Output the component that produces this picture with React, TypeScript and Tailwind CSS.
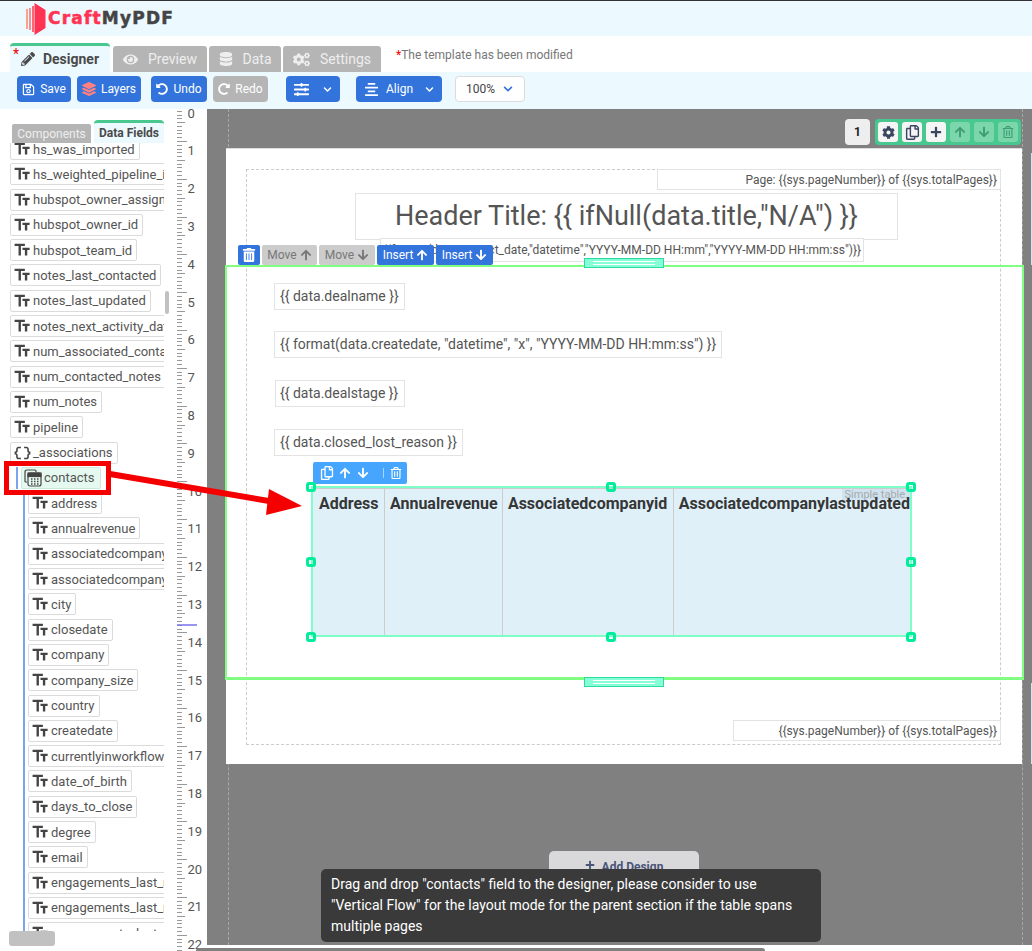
import React from "react";
import {
  FaRegSave, FaLayerGroup, FaUndoAlt, FaRedoAlt, FaSlidersH, FaAlignCenter, FaChevronDown,
  FaPencilAlt, FaEye, FaDatabase, FaCogs, FaArrowUp, FaArrowDown, FaCog, FaRegCopy, FaPlus,
  FaTrashAlt, FaRegTrashAlt,
} from "react-icons/fa";
import { MdFormatSize, MdDataObject } from "react-icons/md";

function Logo() {
  return (
    <div className="flex items-center pl-[26px] h-full">
      <svg width="20" height="32" viewBox="0 0 20 32">
        <rect x="0" y="6" width="2" height="20" fill="#f5a58f" />
        <rect x="3" y="5" width="2" height="22" fill="#ff8a94" />
        <rect x="6" y="3" width="2" height="26" fill="#ff6673" />
        <path d="M8.5 0 L19.5 7 V25 L8.5 32 Z" fill="#ff3352" />
      </svg>
      <span className="font-['DejaVu_Sans',sans-serif] font-bold text-[17px] tracking-[1.2px] ml-[2px] leading-none [-webkit-text-stroke:0.5px_currentColor]">
        <span className="text-[#ff3352]">Craft</span>
        <span className="text-[#444]">MyPDF</span>
      </span>
    </div>
  );
}

function TabBtn({ icon, label, active, mark }: { icon: React.ReactNode; label: string; active?: boolean; mark?: boolean }) {
  return (
    <div
      className={
        active
          ? "relative h-[29px] w-[100px] flex items-center justify-center gap-[8px] rounded-t-[4px] border-t-[3px] border-[#48c78e] bg-[#ecf9ff] text-[#4a4a4a] font-bold text-[14px] mr-[1px]"
          : "h-[26px] flex items-center justify-center gap-[10px] rounded-t-[3px] bg-[#b5b5b5] text-[#eeeeee] text-[14px]"
      }
    >
      {mark && <span className="absolute left-[3px] top-[1px] text-[#e00] text-[14px] leading-none font-normal">*</span>}
      {icon}
      <span>{label}</span>
    </div>
  );
}

function ToolBtn({ children, w, gray }: { children: React.ReactNode; w: string; gray?: boolean }) {
  return (
    <div className={`${w} h-[26px] rounded-[4px] flex items-center justify-center gap-[5px] text-[12px] text-white ${gray ? "bg-[#b5b5b5]" : "bg-[#3273dc]"}`}>
      {children}
    </div>
  );
}

const top1 = [
  "hs_was_imported", "hs_weighted_pipeline_in_progress", "hubspot_owner_assigneddate", "hubspot_owner_id", "hubspot_team_id",
  "notes_last_contacted", "notes_last_updated", "notes_next_activity_date", "num_associated_contacts", "num_contacted_notes",
  "num_notes", "pipeline",
];
const nested = [
  "address", "annualrevenue", "associatedcompanyid", "associatedcompanylastupdated", "city", "closedate", "company", "company_size",
  "country", "createdate", "currentlyinworkflow", "date_of_birth", "days_to_close", "degree", "email",
  "engagements_last_meeting_booked", "engagements_last_meeting_booked_campaign", "engagements_last_meeting_booked_medium",
];

function Field({ name, icon }: { name: string; icon?: React.ReactNode }) {
  return (
    <div className="h-[22px] w-max shrink-0 flex items-center border border-[#dbdbdb] rounded-[2px] pl-[2px] pr-[4px] bg-white text-[13px] text-[#555] leading-none">
      <span className="w-[19px] flex justify-center text-[#444] mr-[1px]">{icon ?? <MdFormatSize size={20} className="-scale-x-100" />}</span>
      <span className="whitespace-nowrap">{name}</span>
    </div>
  );
}

function Sidebar() {
  return (
    <div className="w-[177px] h-full relative shrink-0">
      <div className="flex items-end h-[34px] pl-[12px] gap-[3px]">
        <div className="w-[79px] h-[19px] bg-[#b5b5b5] text-[#eee] text-[12px] rounded-t-[2px] flex items-center justify-center">Components</div>
        <div className="w-[70px] h-[23px] bg-[#ecf9ff] text-[#4a4a4a] font-bold text-[12px] rounded-t-[4px] border-t-[3px] border-[#48c78e] flex items-center justify-center">Data Fields</div>
      </div>
      <div className="ml-[10px] w-[154px] h-[788px] overflow-hidden">
        <div className="-mt-[5px] flex flex-col gap-[3.3px]">
          {top1.map((n) => <Field key={n} name={n} />)}
          <Field name="_associations" icon={<MdDataObject size={20} />} />
          <div className="flex h-[22px] shrink-0 pl-[6px] gap-[3px] items-stretch">
            <div className="w-[2px] bg-[#7ba4ef]" />
            <div className="flex items-center bg-[#e6f9f1] border border-[#cfe8dc] rounded-[2px] pl-[2px] pr-[5px] text-[13px] text-[#555]">
              <svg width="18" height="18" viewBox="0 0 18 18" className="mr-[2px]" fill="none" stroke="#444" strokeWidth="1.2">
                <path d="M3 13 H2 Q1 13 1 12 V3 Q1 1 3 1 H11 Q12 1 12 2 V3" />
                <rect x="4" y="4" width="13" height="13" rx="2" />
                <rect x="4" y="4" width="13" height="3.5" fill="#444" />
                <path d="M7 10 H8.5 M10 10 H11.5 M13 10 H14.5 M7 12.5 H8.5 M10 12.5 H11.5 M13 12.5 H14.5 M7 15 H8.5 M10 15 H11.5 M13 15 H14.5" strokeWidth="1.5" />
              </svg>
              contacts
            </div>
          </div>
          <div className="flex pl-[13px] gap-[3px]">
            <div className="w-[2px] bg-[#7ba4ef] shrink-0" />
            <div className="flex flex-col gap-[3.3px] min-w-0">
              {nested.map((n, i) => <Field key={n + i} name={n} />)}
            </div>
          </div>
        </div>
      </div>
      <div className="h-[15px] ml-[9px] w-[46px] bg-[#c1c1c1] rounded-[3px]" />
      <div className="absolute left-[165px] top-[182px] w-[4px] h-[23px] bg-[#c1c1c1] rounded-[2px]" />
    </div>
  );
}

function Ruler() {
  const ticks: React.ReactNode[] = [];
  for (let i = 0; i < 225; i++) {
    const y = Math.round(32 - 37.8 + i * 3.78) + 0.5;
    const k = i % 10;
    const len = k === 0 ? 10 : k === 5 ? 8 : 5;
    ticks.push(<line key={i} x1="0" x2={len} y1={y} y2={y} stroke="#999" strokeWidth="1" />);
  }
  const nums: React.ReactNode[] = [];
  for (let n = 0; n <= 22; n++) {
    nums.push(
      <text key={n} x="10.5" y={8.5 + n * 37.8} fontSize="13" fill="#555" fontFamily="Roboto, sans-serif">{n}</text>
    );
  }
  return (
    <svg width="30" height="842" viewBox="0 0 30 842" className="shrink-0">
      {ticks}
      {nums}
      <line x1="0" x2="20" y1="516" y2="516" stroke="#7575ee" strokeWidth="1.5" />
    </svg>
  );
}

function Handle({ x, y }: { x: number; y: number }) {
  return (
    <div
      className="absolute w-[10px] h-[10px] border-[3px] border-[#00ee9c] rounded-[3px]"
      style={{ left: x - 5, top: y - 5 }}
    />
  );
}

function FlowBar({ y }: { y: string }) {
  return (
    <div className={`absolute left-[377px] ${y} w-[80px] h-[10px] bg-[#84ffd6] border border-[#2bdc9c] flex flex-col justify-center gap-[2px] px-[8px]`}>
      <div className="h-px bg-white" />
      <div className="h-px bg-white" />
    </div>
  );
}

function Box({ cls, children }: { cls: string; children?: React.ReactNode }) {
  return (
    <div className={`absolute border border-[#e3e3e3] bg-white text-[#555] whitespace-nowrap overflow-hidden flex items-center ${cls}`}>
      {children}
    </div>
  );
}

function PageBtn({ children, off }: { children: React.ReactNode; off?: boolean }) {
  return (
    <div className={`w-[20px] h-[20px] rounded-[3px] flex items-center justify-center ${off ? "bg-[#7bd6ac] text-[#3c9c72]" : "bg-[#f5f5f5] text-[#3a4560]"}`}>
      {children}
    </div>
  );
}

function Canvas() {
  return (
    <div className="flex-1 h-[836px] bg-[#808080] relative overflow-hidden">
      <div className="absolute left-[21px] top-0 bottom-0 border-l border-dashed border-[#a8a8a8]" />
      <div className="absolute left-[815px] top-0 bottom-0 border-l border-dashed border-[#a8a8a8]" />
      <div className="absolute right-0 top-[44px] h-[112px] w-px bg-[#cfe6f2]" />
      <div className="absolute right-0 top-[574px] h-[81px] w-px bg-[#cfe6f2]" />

      {/* page controls */}
      <div className="absolute left-[638px] top-[10px] flex gap-[5px]">
        <div className="w-[25px] h-[26px] rounded-[4px] bg-[#eeeeee] text-[#222] text-[12px] font-bold flex items-center justify-center">1</div>
        <div className="w-[146px] h-[26px] rounded-[4px] bg-[#48c78e] flex items-center gap-[4px] pl-[3px]">
          <PageBtn><FaCog size={13} /></PageBtn>
          <PageBtn><FaRegCopy size={15} /></PageBtn>
          <PageBtn><FaPlus size={12} /></PageBtn>
          <PageBtn off><FaArrowUp size={12} /></PageBtn>
          <PageBtn off><FaArrowDown size={12} /></PageBtn>
          <PageBtn off><FaRegTrashAlt size={12} /></PageBtn>
        </div>
      </div>

      {/* page sheet */}
      <div className="absolute left-[19px] top-[39px] w-[796px] h-[616px] bg-white border-t border-[#dddddd]">
        <div className="absolute left-[20px] top-[20px] w-[755px] h-[576px] border border-dashed border-[#cccccc]" />
        <Box cls="left-[431px] top-[20px] w-[344px] h-[21px] justify-end pr-[3px] text-[12px]">Page: {"{{sys.pageNumber}}"} of {"{{sys.totalPages}}"}</Box>
        <Box cls="left-[129px] top-[44px] w-[543px] h-[47px] justify-center text-[27px]">{'Header Title: {{ ifNull(data.title,"N/A") }}'}</Box>
        <Box cls="left-[154px] top-[89px] w-[484px] h-[24px] justify-center text-[12px]">{'{{format(data.contact_date,"datetime","YYYY-MM-DD HH:mm","YYYY-MM-DD HH:mm:ss")}}'}</Box>
        <Box cls="left-[507px] top-[571px] w-[268px] h-[21px] justify-end pr-[3px] text-[12px]">{"{{sys.pageNumber}} of {{sys.totalPages}}"}</Box>
      </div>

      {/* section */}
      <div className="absolute left-[18px] top-[156px] w-[799px] h-[415px] border-[2px] border-b-[3px] border-[#80ff80]" />
      <FlowBar y="top-[149px]" />
      <FlowBar y="top-[568px]" />

      {/* section toolbar */}
      <div className="absolute left-[31px] top-[136px] flex gap-[2px] h-[20px] text-[12px] text-[#777]">
        <div className="w-[22px] rounded-[2px] bg-[#3273dc] text-white flex items-center justify-center"><FaTrashAlt size={14} /></div>
        <div className="w-[55px] rounded-[2px] bg-[#cccccc] flex items-center justify-center gap-[3px]">Move <FaArrowUp size={12} /></div>
        <div className="w-[56px] rounded-[2px] bg-[#cccccc] flex items-center justify-center gap-[3px]">Move <FaArrowDown size={12} /></div>
        <div className="w-[57px] rounded-[2px] bg-[#3273dc] text-white flex items-center justify-center gap-[3px]">Insert <FaArrowUp size={12} /></div>
        <div className="w-[57px] rounded-[2px] bg-[#3273dc] text-white flex items-center justify-center gap-[3px]">Insert <FaArrowDown size={12} /></div>
      </div>

      {/* fields */}
      <Box cls="left-[67px] top-[174px] w-[131px] h-[27px] pl-[5px] text-[14px]">{"{{ data.dealname }}"}</Box>
      <Box cls="left-[67px] top-[222px] w-[448px] h-[27px] pl-[5px] text-[14px]">{'{{ format(data.createdate, "datetime", "x", "YYYY-MM-DD HH:mm:ss") }}'}</Box>
      <Box cls="left-[68px] top-[271px] w-[130px] h-[27px] pl-[4px] text-[14px]">{"{{ data.dealstage }}"}</Box>
      <Box cls="left-[67px] top-[320px] w-[189px] h-[27px] pl-[5px] text-[14px]">{"{{ data.closed_lost_reason }}"}</Box>

      {/* table toolbar */}
      <div className="absolute left-[106px] top-[353px] w-[94px] h-[22px] rounded-[2px] bg-[#46a6ff] flex items-center pl-[7px] gap-[5px] text-white">
        <FaRegCopy size={14} />
        <FaArrowUp size={12} />
        <FaArrowDown size={12} className="ml-[1px]" />
        <div className="w-px h-[10px] bg-[#a8d4ff] ml-[9px]" />
        <FaRegTrashAlt size={12} className="ml-[1px]" />
      </div>

      {/* table */}
      <div className="absolute left-[104px] top-[377px] w-[601px] h-[151px] border-2 border-[#7fffc8] bg-[#dff0f9] overflow-hidden">
        <div className="absolute right-0 top-[1px] w-[68px] h-[11px] bg-[#cfe3f0] text-[11px] leading-[11px] whitespace-nowrap text-[#aaa] text-right pr-[2px]">Simple table.</div>
        <div className="relative flex h-full border-t border-[#cccccc] text-[16px] font-bold text-[#363636] leading-none">
          <div className="w-[72px] h-full border-r border-[#cccccc] pl-[6px] pt-[7px]">Address</div>
          <div className="w-[118px] h-full border-r border-[#cccccc] pl-[5px] pt-[7px]">Annualrevenue</div>
          <div className="w-[171px] h-full border-r border-[#cccccc] pl-[5px] pt-[7px]">Associatedcompanyid</div>
          <div className="pl-[5px] pt-[7px] whitespace-nowrap">Associatedcompanylastupdated</div>
        </div>
      </div>
      <Handle x={104} y={378} />
      <Handle x={404} y={378} />
      <Handle x={704} y={378} />
      <Handle x={104} y={453} />
      <Handle x={704} y={453} />
      <Handle x={104} y={528} />
      <Handle x={404} y={528} />
      <Handle x={704} y={528} />

      {/* add design */}
      <div className="absolute left-[342px] top-[742px] w-[150px] h-[30px] rounded-[5px] bg-[#d9d9dc] flex items-start justify-center pt-[7px] gap-[7px] text-[12px] font-bold text-[#4a5578]">
        <FaPlus size={10} className="mt-[2px]" />
        Add Design
      </div>
      {/* hint */}
      <div className="absolute left-[114px] top-[760px] w-[500px] h-[73px] rounded-[5px] bg-[#3a3a3a] text-white text-[14px] leading-[21px] px-[10px] py-[5px]">
        Drag and drop "contacts" field to the designer, please consider to use "Vertical Flow" for the layout mode for the parent section if the table spans multiple pages
      </div>
    </div>
  );
}

export default function App() {
  return (
    <div className="relative w-[1032px] h-[951px] overflow-hidden bg-white font-['Roboto',sans-serif]">
      <div className="h-[36px] bg-[#ecf9ff] border-t border-[#333]">
        <Logo />
      </div>

      <div className="h-[36px] bg-white flex items-end pl-[10px] gap-[2px] relative">
        <TabBtn active mark icon={<FaPencilAlt size={14} />} label="Designer" />
        <div className="w-[94px]"><TabBtn icon={<FaEye size={15} />} label="Preview" /></div>
        <div className="w-[72px]"><TabBtn icon={<FaDatabase size={14} />} label="Data" /></div>
        <div className="w-[98px]"><TabBtn icon={<FaCogs size={17} />} label="Settings" /></div>
        <div className="self-start mt-[12px] ml-[13px] text-[12px] text-[#777] leading-[14px]"><span className="text-[#e00]">*</span>The template has been modified</div>
      </div>

      <div className="h-[37px] bg-[#ecf9ff] flex items-start pt-[4px] pl-[17px]">
        <ToolBtn w="w-[54px]"><FaRegSave size={13} />Save</ToolBtn>
        <div className="w-[6px]" />
        <ToolBtn w="w-[64px]"><FaLayerGroup size={14} className="text-[#ff8080]" />Layers</ToolBtn>
        <div className="w-[10px]" />
        <ToolBtn w="w-[56px]"><FaUndoAlt size={12} />Undo</ToolBtn>
        <div className="w-[6px]" />
        <ToolBtn w="w-[55px]" gray><FaRedoAlt size={12} />Redo</ToolBtn>
        <div className="w-[18px]" />
        <ToolBtn w="w-[54px]"><FaSlidersH size={15} /><span className="w-[4px]" /><FaChevronDown size={9} /></ToolBtn>
        <div className="w-[16px]" />
        <ToolBtn w="w-[86px]"><FaAlignCenter size={15} /><span className="ml-[2px]">Align</span><span className="w-[2px]" /><FaChevronDown size={9} /></ToolBtn>
        <div className="w-[13px]" />
        <div className="w-[70px] h-[26px] bg-white border border-[#dbdbdb] rounded-[4px] flex items-center justify-center gap-[8px] pr-[1px] text-[12px] text-[#444]">
          100%<FaChevronDown size={10} className="text-[#3273dc]" />
        </div>
      </div>

      <div className="flex h-[842px]">
        <Sidebar />
        <Ruler />
        <Canvas />
      </div>

      {/* horizontal page scrollbar */}
      <div className="absolute left-[196px] top-[948px] w-[569px] h-[3px] bg-[#808080] rounded-t-[3px]" />

      {/* annotation */}
      <div className="absolute left-[4px] top-[461px] w-[107px] h-[34px] border-[5px] border-[#f50000]" />
      <svg className="absolute left-0 top-0 pointer-events-none" width="320" height="540" viewBox="0 0 320 540">
        <line x1="110" y1="474" x2="275" y2="502" stroke="#f50000" strokeWidth="6" />
        <polygon points="269,489 302,506 266,515" fill="#f50000" />
      </svg>
    </div>
  );
}
